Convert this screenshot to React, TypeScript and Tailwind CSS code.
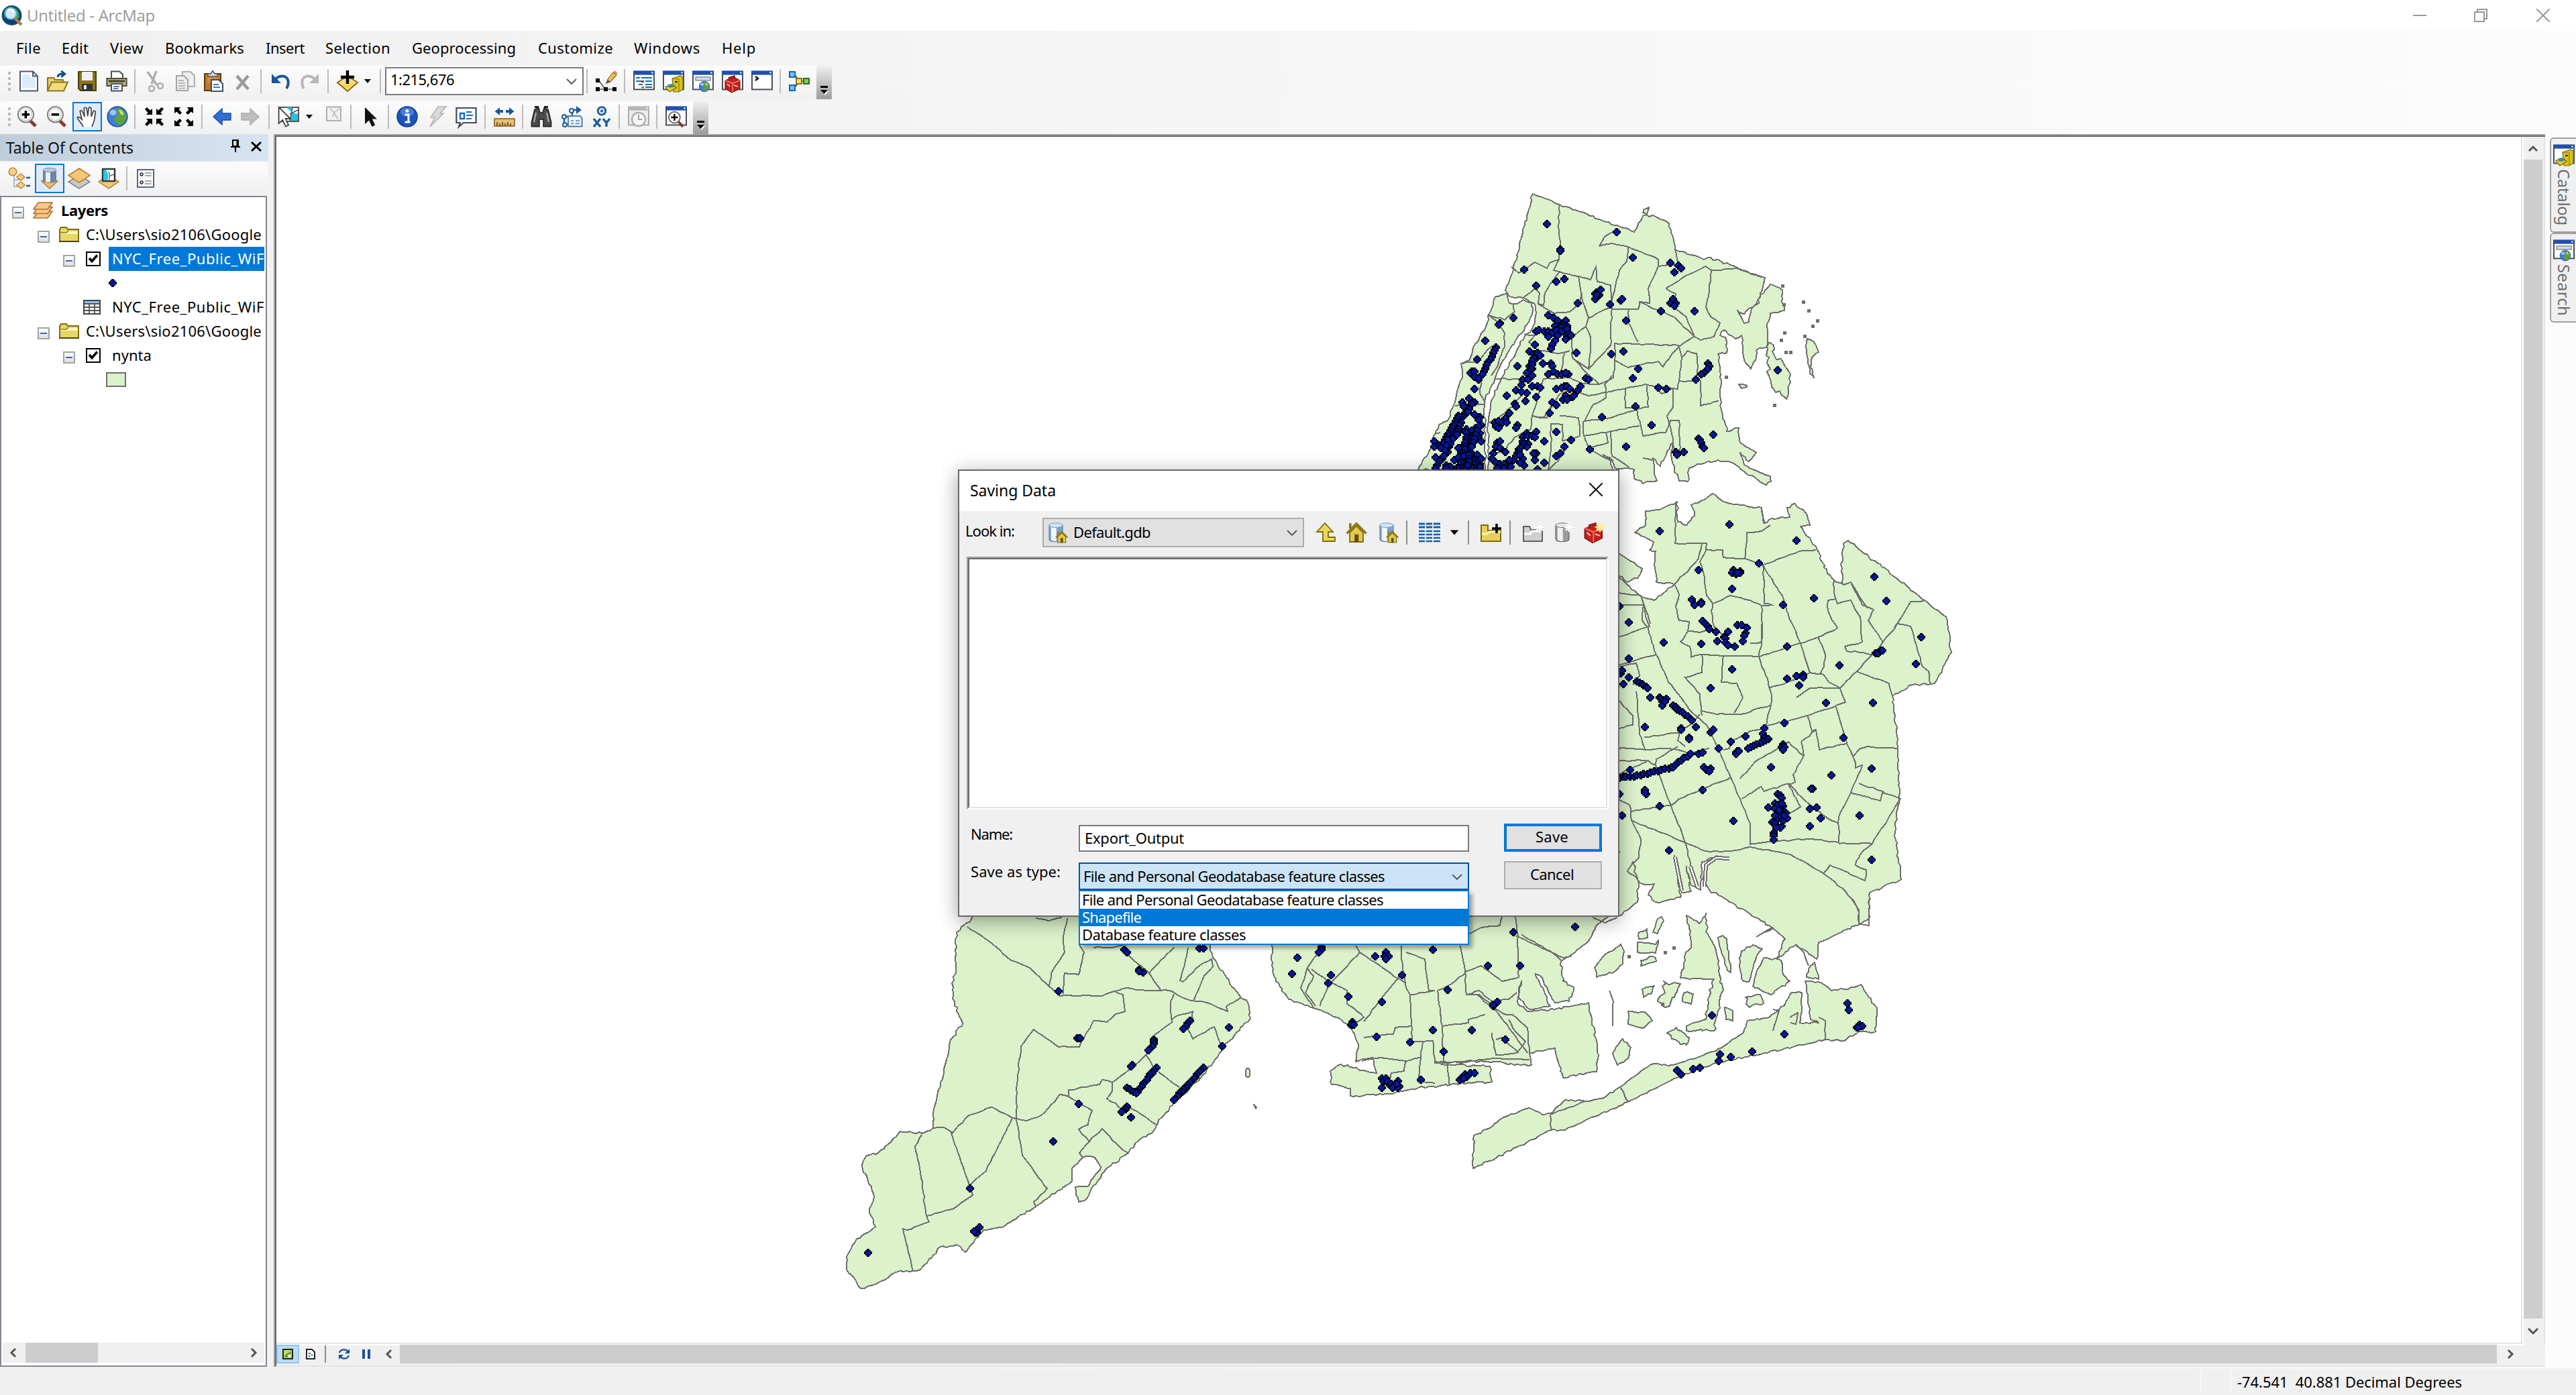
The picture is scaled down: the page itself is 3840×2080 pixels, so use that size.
import React, { useLayoutEffect, useRef } from "react";

/* ---------- text with a fixed advance width ---------- */
function Fit({ w, vertical, className = "", children }: { w: number; vertical?: boolean; className?: string; children: string }) {
  const ref = useRef<HTMLSpanElement>(null);
  useLayoutEffect(() => {
    const el = ref.current!;
    el.style.letterSpacing = "0px";
    const r = el.getBoundingClientRect();
    const natural = vertical ? r.height : r.width;
    el.style.letterSpacing = `${(w - natural) / children.length}px`;
  }, [w, children, vertical]);
  return (
    <span ref={ref} className={"inline-block shrink-0 -translate-y-px whitespace-pre " + className}>
      {children}
    </span>
  );
}

/* ---------- map geometry ---------- */
type Frame = { x: number; y: number; sx: number; sy: number };
type P = [number, number];
const NORTH: Frame = { x: 2080, y: 270, sx: 680 / 1568, sy: 1 / 3 };
const EAST: Frame = { x: 2380, y: 700, sx: 560 / 1568, sy: 720 / 1568 };
const SOUTH: Frame = { x: 1880, y: 1340, sx: 0.625, sy: 1 / 3 };
const WEST: Frame = { x: 1240, y: 1340, sx: 680 / 1568, sy: 600 / 1568 };

const parse = (f: Frame, s: string): P[] =>
  s.trim().split(/\s+/).map((t) => {
    const [a, b] = t.split(",").map(Number);
    return [f.x + a * f.sx, f.y + b * f.sy];
  });

let seed = 7;
const rnd = () => {
  seed = (seed * 16807) % 2147483647;
  return seed / 2147483647 - 0.5;
};

function rough(pts: P[], amp: number, closed: boolean): string {
  const out: P[] = [];
  const n = pts.length;
  const step = closed ? 5 : 7;
  for (let i = 0; i < (closed ? n : n - 1); i++) {
    const a = pts[i];
    const b = pts[(i + 1) % n];
    const d = Math.hypot(b[0] - a[0], b[1] - a[1]);
    const k = Math.max(1, Math.round(d / step));
    for (let j = 0; j < k; j++) {
      const t = j / k;
      const q = j === 0 ? 0 : amp;
      out.push([a[0] + (b[0] - a[0]) * t + rnd() * q, a[1] + (b[1] - a[1]) * t + rnd() * q]);
    }
  }
  if (!closed) out.push(pts[n - 1]);
  return "M" + out.map((p) => `${Math.round(p[0])} ${Math.round(p[1])}`).join("L") + (closed ? "Z" : "");
}

const LAND: [Frame, string, number][] = [
  [NORTH, "78,1292 100,1240 125,1190 135,1130 150,1090 178,1075 205,990 212,940 230,880 225,815 255,800 265,760 320,620 322,595 345,515 385,500 392,545 412,550 440,532 468,542 472,580 455,640 425,690 395,750 372,800 345,870 325,930 306,990 308,1100 310,1292", 3],
  [NORTH, "472,57 565,105 700,170 820,228 835,190 850,155 885,153 920,175 940,190 955,250 962,305 1060,350 1075,342 1150,375 1200,400 1270,432 1255,500 1250,545 1215,570 1200,595 1175,580 1200,635 1215,630 1225,570 1265,500 1290,462 1330,485 1328,540 1338,580 1290,590 1278,640 1278,740 1240,755 1238,800 1222,840 1200,800 1190,690 1170,705 1130,665 1115,690 1135,700 1140,768 1110,775 1115,850 1120,890 1115,960 1120,1020 1135,1090 1140,1120 1180,1105 1185,1170 1240,1215 1215,1255 1185,1215 1200,1270 1230,1290 1290,1320 1292,1345 1275,1360 1200,1300 1160,1260 1110,1248 1060,1262 1010,1285 1005,1345 975,1340 960,1290 950,1240 955,1170 935,1210 910,1275 885,1240 890,1310 900,1340 850,1352 820,1330 820,1290 790,1285 755,1285 740,1240 715,1225 740,1250 750,1310 320,1310 320,1060 330,980 360,900 400,800 430,720 470,660 485,590 478,545 440,522 400,520 378,488 405,400 435,240", 3],
  [NORTH, "1290,722 1300,735 1305,785 1335,815 1352,850 1357,905 1345,975 1325,955 1300,930 1280,860 1285,790 1278,740", 6],
  [NORTH, "1415,705 1430,710 1445,735 1455,765 1432,790 1428,830 1440,878 1425,860 1418,800 1412,740", 2],
  [NORTH, "1180,908 1205,912 1208,922 1190,926", 1],
  [NORTH, "855,125 872,118 865,148 852,140", 1],
  [EAST, "90,270 190,322 180,345 130,365 90,340", 3],
  [EAST, "90,345 130,375 180,410 240,425 290,395 325,372 250,365 243,320 245,265 220,262 238,235 160,205 205,180 205,135 280,125 335,105 340,170 375,180 410,150 395,115 440,100 485,78 530,105 600,115 690,125 698,175 730,160 805,155 795,125 830,112 870,140 890,180 850,185 870,210 915,250 940,300 990,360 1030,375 1022,330 1030,240 1050,230 1370,425 1460,480 1480,595 1410,695 1320,700 1235,735 1245,800 1258,900 1262,1060 1245,1180 1272,1330 1140,1375 1138,1460 1085,1480 927,1535 919,1590 831,1543 752,1586 788,1524 734,1488 534,1394 470,1365 445,1330 455,1280 500,1255 440,1275 435,1365 395,1350 375,1290 395,1370 355,1375 325,1255 350,1390 245,1405 215,1380 240,1345 190,1345 130,1305 150,1275 175,1345 170,1405 90,1450", 3],
  [SOUTH, "25,60 25,300 35,370 65,450 125,490 180,530 215,580 232,650 225,730 265,712 275,780 190,742 165,770 168,830 212,850 212,882 290,875 400,840 550,818 545,750 445,742 415,735 555,728 620,745 645,745 640,690 700,670 720,800 800,775 805,700 780,465 700,495 635,505 612,470 620,370 612,440 640,495 690,480 655,335 665,345 700,465 735,460 745,395 720,370 715,280 740,250 780,190 805,110 850,60", 3],
  [SOUTH, "505,1205 507,1060 545,1025 580,975 640,935 670,965 690,960 725,900 775,905 810,895 865,830 930,740 980,745 1040,710 1085,680 1150,600 1160,545 1205,535 1235,495 1250,470 1265,420 1290,420 1290,500 1285,555 1330,555 1310,540 1298,370 1335,375 1360,410 1400,405 1430,385 1468,490 1465,595 1425,595 1390,635 1345,630 1200,690 1085,735 990,800 875,910 725,1035 690,1035 560,1160", 2.5],
  [SOUTH, "1015,75 1045,110 1060,65 1065,160 1085,230 1092,340 1100,400 1090,500 1080,590 1015,590 1015,570 1060,540 1065,450 1080,360 1000,355 1010,260 1025,220 1020,120", 4],
  [SOUTH, "955,80 960,100 945,155 935,150 945,90", 2],
  [SOUTH, "900,150 920,135 922,175 900,180", 3],
  [SOUTH, "898,195 940,205 947,185 940,243 898,240", 2],
  [SOUTH, "858,205 865,235 862,290 845,325 800,350 795,310 820,250", 2],
  [SOUTH, "905,275 935,258 942,280 905,300", 3],
  [SOUTH, "1100,165 1110,180 1120,330 1112,320 1095,220 1090,175", 2],
  [SOUTH, "1172,208 1195,225 1180,260 1165,370 1150,370 1140,300 1145,235", 3],
  [SOUTH, "1200,265 1240,275 1245,340 1260,370 1215,430 1172,390 1180,330", 3],
  [SOUTH, "1320,285 1330,360 1300,350 1310,300", 2],
  [SOUTH, "960,370 975,385 1000,380 985,440 965,485 945,460 960,425", 7],
  [SOUTH, "908,405 938,390 930,425 912,440", 5],
  [SOUTH, "1010,420 1030,425 1025,470 1005,460", 3],
  [SOUTH, "1155,440 1190,430 1195,470 1165,485", 7],
  [SOUTH, "875,505 915,508 932,545 910,580 875,560", 2],
  [SOUTH, "1105,485 1125,500 1125,545 1108,540", 2],
  [SOUTH, "990,575 1020,620 1015,655 995,640 968,600", 4],
  [SOUTH, "862,628 882,665 875,715 850,745 838,690", 2],
  [WEST, "480,60 480,80 430,130 425,200 427,280 413,330 415,390 450,485 405,560 385,680 350,820 348,895 310,915 235,908 160,990 120,1000 103,1040 125,1100 145,1160 130,1220 150,1278 85,1325 50,1395 50,1445 100,1518 155,1500 220,1455 305,1445 370,1360 430,1348 460,1378 520,1290 585,1280 700,1200 825,1100 825,1050 865,1005 905,1008 925,1045 880,1120 838,1125 848,1180 870,1175 940,1055 1020,990 1060,935 1100,915 1120,875 1175,795 1285,680 1360,560 1438,465 1430,405 1405,385 1310,230 1300,190 1300,60", 3],
  [WEST, "1423,668 1427,662 1433,662 1437,668 1437,690 1433,696 1427,696 1423,690", 0],
  [WEST, "1450,803 1460,812 1458,818", 1],
];

const LINES: [Frame, string][] = [
  // Bronx and upper Manhattan
  ...([
    "565,105 560,200 568,290 562,350 545,400 630,425 672,440 690,385 695,450 740,465 745,560 665,612 640,520 630,425",
    "400,385 425,410 480,362 520,390 530,365 562,350", "435,525 480,480 495,500 492,550 510,555 515,500 545,440 565,405",
    "492,550 545,590 600,585 635,545 640,500", "700,290 720,250 760,215", "700,290 745,280 800,295 905,350 905,380 870,480 875,545 840,540 835,572 745,572 745,540",
    "800,295 795,360 770,400 745,530 740,735 665,840", "962,305 975,375 905,380", "930,480 985,435 1065,382 1085,400 1170,390 1270,432", "930,480 965,505 955,560 1000,610 1028,695",
    "840,540 960,610 1028,695", "1085,400 1080,490 1068,560 1085,610 1117,635 1095,695 1050,712 1028,695 975,740 930,810 920,830 905,808 850,820 800,835 755,800 755,725 975,735",
    "803,572 803,635 835,720", "665,612 655,650 672,700 665,840 610,795 605,700 655,650", "610,795 700,910 750,880 755,800", "975,740 985,790 975,895 970,930 860,910 725,945 720,910 745,870",
    "985,790 1005,760 1035,770 1040,830 1030,895 975,895", "1050,890 1050,1005 1112,985", "700,910 640,905 600,880 510,885 470,1050 510,1060 540,1000 565,950",
    "725,945 725,970 680,1000 650,1075 740,1060 830,1020 790,1015 790,930", "830,1020 870,1010 865,915", "830,1020 850,1140 930,1125 945,1070 975,1070 980,1195 960,1230", "955,930 955,1010 935,1050 950,1130 960,1200",
    "840,1095 740,1120 648,1140 645,1075", "740,1120 745,1230 805,1280", "650,1145 665,1195 730,1170 725,1125", "665,1195 700,1225 750,1250", "565,1050 630,1060 635,1140 575,1160 575,1090 535,1085 535,1200 525,1292 560,1250 580,1205",
    "565,950 600,935 665,960 725,945", "320,600 375,620 410,585 405,550", "320,600 345,625 375,680 375,740 350,830 330,870", "205,1005 270,1000 305,1000", "340,885 425,885 440,950 400,1010 340,1075 320,1080",
    "230,815 280,810 330,740 350,730", "470,1050 465,1110 410,1145 380,1200 325,1230", "540,1000 520,1060 470,1050", "442,685 480,690 460,720 490,760 560,770 600,760", "580,770 575,830 560,870",
    "155,1125 135,1130", "300,830 290,950 308,990", "955,930 915,950 890,925", "850,1240 890,1250",
  ].map((s) => [NORTH, s] as [Frame, string])),
  // Queens
  ...([
    "330,105 328,240 460,240 455,260 525,262 530,285 620,290 628,205 690,200 725,180", "440,240 425,290 380,330 325,372", "460,260 430,300 450,350 460,410 485,435 480,460 490,510 530,540",
    "620,290 695,310 700,380 700,435 730,440 690,442 690,560 678,600", "695,310 845,265 915,262", "695,310 740,370 775,410 800,470 850,565 890,660 940,665", "485,435 560,410 640,425 690,442",
    "325,372 345,405 330,445 345,490 385,495 380,525 350,560 390,575 395,610 440,600 520,605 680,607 850,565 925,545 1005,515 965,460 965,425 1000,420", "678,600 690,640 715,680 730,735 728,765 600,795 500,795 440,785",
    "440,600 440,660 370,675 430,730 440,800", "528,605 522,690 585,695 610,740 575,790", "690,125 698,175", "990,360 990,400 1005,435 1060,425 1100,480 1110,560 1035,575 1045,590 1115,595 1145,600",
    "1030,375 1060,365 1110,440 1155,455 1135,490 1195,560 1145,605 1085,655 1015,710 890,710 835,740", "1195,560 1240,520 1310,430 1370,425", "1240,520 1255,500 1310,510 1335,570 1360,640 1385,655 1392,695", "925,545 955,600 950,640 935,660 970,690 1015,710",
    "1085,655 1220,695 1235,735", "1015,710 1040,755 990,770 880,800 700,835", "720,710 840,680 890,660", "728,765 715,800 705,850", "880,800 900,850 915,845 930,910 1045,890 1010,800 1000,770",
    "1045,890 1075,940 1080,970 1110,960 1060,1050 1010,1130 1012,1210 880,1200 640,1215", "1068,935 1100,905 1130,900 1255,905", "1095,1020 1195,1045 1185,1075 1060,1050", "1195,1050 1268,1070 1150,1215 1010,1215", "1150,1215 1100,1250 1080,1285 1125,1300 1120,1335 975,1285 945,1310",
    "90,440 195,440 210,490 220,510 90,545", "195,440 190,490 215,515 250,600 90,635", "90,400 185,410 225,500", "250,600 300,690 400,790 460,830 510,910 560,1000 600,1070 640,1150 640,1220",
    "165,720 180,860 205,910 90,905", "200,870 335,855 390,830 430,795", "205,910 300,905 400,920 470,905", "90,945 215,945 245,960 310,1090 370,1210 400,1310", "245,960 250,940 340,900", "310,1090 345,1070 560,1000",
    "600,1005 660,950 800,885 865,930 820,990 830,1015 700,1045 685,1030 650,1050 605,1070", "530,910 555,905 560,885 640,850 695,840", "855,885 915,845", "855,885 865,930", "90,1070 140,1090 145,1140 370,1210 455,1240 560,1240 640,1225 810,1250 945,1310 1040,1370 1095,1430 1095,1465",
    "145,1110 310,1090", "785,1130 850,1095 800,1020 870,1075 960,1130 1012,1150", "90,745 150,800 150,830 90,840", "90,990 160,965 210,950", "145,1140 185,1200 175,1260 150,1280", "670,1515 735,1490",
    "380,525 430,530 480,515", "690,500 690,560 640,565", "90,640 165,630 180,670 150,700", "1060,365 1090,400 1130,450", "345,850 340,880 370,900",
  ].map((s) => [EAST, s] as [Frame, string])),
  // Brooklyn and the Rockaways
  ...([
    "575,80 570,120 525,130 495,158", "607,80 612,165 615,350 575,370 525,300 490,325 455,380 420,410", "607,165 720,265 740,255", "620,160 690,235 715,275", "475,210 485,300 490,430 520,430 550,470",
    "335,210 335,270 345,400 355,430 415,410 400,410 390,270 345,240", "150,210 110,310 95,400 125,490", "225,210 235,240 160,390 140,480", "235,240 345,380", "120,315 160,370 205,410 205,470 245,530 215,580",
    "330,345 285,450 245,550", "355,430 358,565 360,640 410,635 415,735", "420,410 432,570 435,730", "432,570 495,555 495,540 535,520", "358,570 320,575 315,605 245,620", "385,640 380,710 345,725 285,710 240,725",
    "380,710 375,820 415,825", "345,725 340,770 310,780 305,830", "445,742 448,830", "515,430 560,500 600,600 635,690", "545,480 585,520 600,520 635,580 640,690", "590,540 600,580 630,640 610,690 560,700 550,600",
    "560,630 575,620 615,690", "415,730 450,735 555,715 640,720", "490,430 520,410 550,460 590,450 610,420", "858,845 875,910", "690,965 692,1035", "690,965 775,905", "1345,630 1345,545 1330,530", "1260,530 1280,510 1275,560 1262,555",
    "110,310 125,345 105,420 130,480", "1305,300 1295,240 1275,205", "830,410 840,460 838,570", "1220,130 1180,170", "1410,0 1425,60 1425,110 1450,120 1450,80", "1450,0 1450,80", "790,85 820,108 850,85", "1220,495 1235,500 1220,590",
  ].map((s) => [SOUTH, s] as [Frame, string])),
  // Staten Island
  ...([
    "465,110 540,165 615,240 680,270 745,340 785,378 930,378 970,360 1015,348 1080,358 1160,358 1235,398 1290,405 1360,438 1355,420 1405,388", "810,75 795,150 800,210 755,290 748,340", "850,180 868,210 848,295 800,290 795,370",
    "970,360 1000,375 1008,438 975,450 945,480 900,475 870,535 850,577 780,577 695,510 650,575 635,740 635,860 655,1000 740,1130 695,1180 700,1200", "1015,215 1090,290 1130,355", "1175,190 1090,290", "1225,190 1215,240 1197,320 1205,325 1265,260 1305,235 1310,265 1280,300 1245,395",
    "1175,370 1165,400 1168,480 1110,530", "1168,470 1190,455 1240,440 1240,470 1225,510 1240,545 1315,500 1340,575", "1080,610 1110,540", "1080,610 1115,670 1195,735", "1080,610 1020,670 965,715 930,705 920,725 815,745 815,770 785,762 720,845 670,865 620,855 550,812 470,845 415,912 385,890 348,895",
    "965,715 965,750 945,780 1000,820 1020,810 1115,880", "815,770 895,825 880,880 848,900 885,945 850,990 860,1005", "885,945 930,897 1000,980 1020,990", "408,905 475,1125 485,1155 415,1210 325,1235 303,1050 285,965 310,920", "620,855 575,960 530,1060 475,1115", "325,1235 335,1260 255,1292 245,1285 278,1450",
    "900,190 965,190 1000,180", "700,75 745,85 790,72",
  ].map((s) => [WEST, s] as [Frame, string])),
];

/* each token is either "x,y" or "x,y,x2,y2,n" for n evenly spread points */
const DOTS: [Frame, string][] = [
  [NORTH, "521,192 567,308 567,312 442,396 484,467 553,450 580,437 760,228 816,342 945,366 975,378 983,390 959,408 627,546 737,551 775,533 779,527 912,582 1028,582 793,624 622,768 742,774 783,762 834,840 816,881 903,924 931,930 1074,816 1080,830 1074,840 1062,857,1050,865,2 1032,888 825,1008 710,1056 880,1092 1092,1134 793,1188 667,1200 1314,846 965,1212 991,1212 967,1224 1042,1150 1045,1160 1050,1170 1055,1185 1062,1195 947,547 954,528 965,545 957,555 690,495 685,505 700,510 707,486 690,520 685,530 692,510 405,612 360,638 355,643 309,714 281,798 419,828 479,732 346,744,300,865,10 262,850 258,860 272,852 270,875 285,890 288,880 270,930 382,960 252,970 270,990 232,990 240,1005 262,995 236,1010 255,1020 525,600 545,610 560,625 585,624 575,640 590,648 548,650 485,670 495,665 510,672 525,670 540,678 555,665 570,655 560,690 580,680 595,675 603,690 585,705 525,697 548,714 538,730 535,750 570,670 590,660 460,762 475,772 490,765 480,800 497,780 508,816 536,816 470,840 460,830 475,790,460,870,6 470,870 450,860 437,888 432,912 455,890 470,915 490,920 415,936 450,948 484,963 447,984 500,922 435,940 410,995 415,1005 540,828 545,850 525,864 560,862 570,865 595,864 585,860 655,882 662,886 580,915 555,930 570,925 590,915 600,930 622,942 637,918 628,938 585,960 575,975 590,975 608,968 615,960 540,990 555,1000 530,1038 391,1038 380,1060 340,1080 355,1075 370,1080 385,1080 345,1095 355,1105 420,1092 415,1102 553,1122 604,1158 580,1188 553,1230 567,1218 511,1164 484,1122 450,1125 440,1145 455,1140 470,1140 480,1145 455,1175 450,1190 425,1200 440,1165,420,1215,6 512,1260 484,1218 480,1248 475,1220 440,1240 445,1272 430,1260 415,1230 405,1250 395,1275 380,1210 430,1225 350,1170 360,1165 345,1190 360,1195 335,1215 330,1240 345,1260 360,1265 375,1265 350,1285 375,1285 390,1245 488,1290"],
  [NORTH, "240,1040,205,1095,8 218,1052,185,1140,9 200,1090,155,1195,10 225,1080,200,1150,6 250,1030 270,1045 290,1055 285,1065 297,1090 275,1105 265,1115 292,1130 245,1110 240,1120 265,1140 255,1150 285,1145 275,1160 295,1165 260,1170 245,1165 235,1180 218,1195 250,1200 265,1190 240,1205 225,1215 135,1165 135,1190 150,1180 165,1170 185,1190 190,1175 210,1135 155,1195 180,1210 170,1225 160,1240 137,1237 150,1255 143,1270 140,1285 175,1270 190,1275 205,1250 215,1235 230,1260 215,1280 235,1225,280,1225,5 240,1240,285,1250,5 225,1260,290,1265,6 210,1285,292,1285,8 245,1130,235,1230,8 265,1150,250,1270,9 285,1100,265,1190,6 180,1160,165,1230,4 295,1240 290,1275 175,1285"],
  [EAST, "263,200 554,179 834,230 677,304 1159,348 1209,427 907,418 778,440 424,326 571,326 565,337 599,331 600,337 580,340 590,336 565,388 396,423 407,438 435,432 436,436 95,444 134,496 279,561 134,614 436,566 443,492 455,503 463,510 470,518 498,526 503,557 531,545 548,526 535,550 540,560 548,570 576,574 588,505 605,505 627,513 620,530 615,542 609,557 795,574 1013,635 1355,545 1332,631 1165,597 1175,595 1185,590 1192,588 565,648 476,709 795,679 834,670 862,665 862,674 845,701 957,757 1153,757 784,823 1030,871 1148,971 980,993 901,1035 896,1037 889,1102 918,1097 935,1132 890,1158 1097,1123 1148,1267 100,660 108,652 134,675 112,697 170,688,215,708,6 223,740 262,740 270,745 275,755 280,748 290,745 275,765 285,755 318,766,400,815,9 414,835 201,835 353,840 351,845 386,870 387,875 476,852 487,844 509,905 559,884 621,866 699,840 693,860 700,870 715,876 705,880,632,908,7 582,918 590,915 583,922 593,915 428,923 440,918 450,965 476,971 460,975 468,980 442,1040 571,1140 728,966 778,893 770,902 785,900 780,910 302,1237 201,1042 207,1054 203,1048 97,1055 106,1123 262,1093 140,975 95,1000,185,993,7 195,990,315,967,9 320,965,390,925,7 755,1056 768,1058 775,1068 715,1097 743,1083 755,1090 745,1100 778,1095 770,1085 755,1110 780,1110 790,1115 765,1122 797,1132 778,1140 750,1135 732,1145 745,1150 772,1158 765,1165 750,1165 740,1180 740,1190 738,1202 760,1105 785,1125 745,1125"],
  [SOUTH, "145,218 143,228 137,242 86,264 75,336 166,342 160,378 208,438 288,462 217,550 214,562 222,565 275,618 355,642 409,588 502,588 435,684 582,630 444,408 336,342 409,228 272,258 297,240 293,260 304,258 296,270 540,300 617,300 601,150 748,126 563,462 553,480 555,475 380,810 288,803 290,815 298,805 305,825 288,845 300,815 310,830 325,815 318,835 328,840 315,845 326,845 322,828 475,810 480,800 485,790 487,783 495,785 500,780 510,780 488,798 483,806 1075,522 1247,606 1171,684 1094,695 1120,708 1090,727 1047,756 1031,762 992,768 1002,788 1398,468 1401,498 1421,575 1428,565 1432,572 1425,578"],
  [WEST, "1007,200 1015,208 1055,275 1062,280 1072,288 1058,280 1265,192 1276,192 779,360 845,543 852,543 1364,501 1342,574 1231,475,1208,508,4 1106,547 1105,555 1108,565 1100,575 1092,585 1088,592 1033,646 1030,652 1114,660,1045,760,12 1015,736,1045,760,5 1277,660,1175,785,16 848,799 1015,808 1008,818 1002,828 998,832 1028,852 760,945 475,1129 508,1278 500,1290 492,1300 497,1302 490,1298 124,1380"],
];

const dotList: P[] = DOTS.flatMap(([f, s]) =>
  s.trim().split(/\s+/).flatMap((t) => {
    const v = t.split(",").map(Number);
    const at = (a: number, b: number): P => [Math.round((f.x + a * f.sx) / 2) * 2, Math.round((f.y + b * f.sy) / 2) * 2];
    if (v.length < 5) return [at(v[0], v[1])];
    const n = v[4];
    return Array.from({ length: n }, (_, i) => {
      const k = i / (n - 1);
      return at(v[0] + (v[2] - v[0]) * k, v[1] + (v[3] - v[1]) * k);
    });
  })
);
const landPaths = LAND.map(([f, s, a]) => rough(parse(f, s), a, true));
const linePath = LINES.map(([f, s]) => rough(parse(f, s), 1.6, false)).join("");

const Dot = ({ x, y }: { x: number; y: number }) => (
  <g transform={`translate(${x} ${y})`}>
    <path d="M-2-6h4v2h2v2h2v4h-2v2h-2v2h-4v-2h-2v-2h-2v-4h2v-2h2z" fill="#000" />
    <path d="M-1-4h2v1h2v2h1v2h-1v2h-2v1h-2v-1h-2v-2h-1v-2h1v-2h2z" fill="#0018a8" />
  </g>
);

function CityMap() {
  return (
    <svg className="block h-[1798px] w-[3346px]" viewBox="412 204 3346 1798" shapeRendering="crispEdges">
      <g fill="#dbf2cb" stroke="#6e6e6e" strokeWidth="2" strokeLinejoin="round">
        {landPaths.map((d, i) => <path key={i} d={d} />)}
      </g>
      <path d={linePath} fill="none" stroke="#6e6e6e" strokeWidth="2" />
      {["M2541 1322L2543 1290L2558 1279L2578 1280", "M2497 1278L2507 1328", "M2520 1292L2530 1322"].map((d) => (
        <g key={d} fill="none">
          <path d={d} stroke="#6e6e6e" strokeWidth="6" />
          <path d={d} stroke="#fff" strokeWidth="2" />
        </g>
      ))}
      <g fill="#6e6e6e">
        {[[2655, 424], [2686, 448], [2694, 461], [2707, 476], [2700, 484], [2688, 499], [2658, 494], [2653, 505], [2660, 523], [2667, 523], [2643, 602], [2657, 452], [2571, 560], [2493, 1411], [2426, 1424], [2476, 1495], [2480, 1418]].map(([x, y]) => (
          <rect key={x + "-" + y} x={x} y={y} width="5" height="5" />
        ))}
      </g>
      {dotList.map(([x, y], i) => <Dot key={i} x={x} y={y} />)}
    </svg>
  );
}

/* ---------- icons, drawn on a 16-unit grid ---------- */
const I = ({ c = "", children }: { c?: string; children: React.ReactNode }) => (
  <svg viewBox="0 0 16 16" className={"h-8 w-8 shrink-0 overflow-visible " + c}>{children}</svg>
);
const WindowFrame = ({ grey }: { grey?: boolean }) => (
  <>
    <rect x=".5" y=".8" width="15" height="13.4" fill={grey ? "#ececec" : "#fff"} stroke={grey ? "#aaa" : "#4a4f5a"} />
    <rect x="0" y=".3" width="16" height="3" fill={grey ? "#b5b5b5" : "#1f4fae"} />
    <rect x="13.6" y="1.2" width="1.2" height="1" fill="#fff" />
  </>
);
const Globe = ({ x, y, r }: { x: number; y: number; r: number }) => (
  <g transform={`translate(${x} ${y}) scale(${r / 7})`}>
    <circle r="7" fill="#3f7fd6" stroke="#28549c" strokeWidth=".8" />
    <path d="M0-6C4-6 6-3 6.3 0C6 4 3 6 1 6C0 4-3 4-2 1C-1-1 1-1 0-3C-1-4-1-5 0-6Z" fill="#5fa23a" />
    <path d="M1-5C3-5 5-3 4-1L2-2Z" fill="#c5e08a" />
    <ellipse cx="-3" cy="-3" rx="2.4" ry="2" fill="#b7d6fb" opacity=".8" />
  </g>
);
const Lens = ({ sign, c = "" }: { sign: string; c?: string }) => (
  <I c={c}>
    <path d="M10 10.5L14.6 15" stroke="#8c3a2e" strokeWidth="2.4" />
    <circle cx="7.2" cy="6.4" r="5.8" fill="#f4f4f4" stroke="#777" strokeWidth=".9" />
    <circle cx="7.2" cy="6.4" r="4.4" fill="#fff" stroke="#c4c4c4" strokeWidth=".6" />
    <path d={sign} stroke="#000" strokeWidth="1.8" />
  </I>
);
const CatalogShape = () => (
  <>
    <path d="M7 6L13 4L15 5V14L12 16H8Z" fill="#d8c21a" stroke="#75690c" strokeWidth=".6" />
    <path d="M7 6L12 6.6V16" fill="none" stroke="#8f8112" strokeWidth=".6" />
    <path d="M2 12L8 11L10 13L5 16L3 14Z" fill="#e3cc22" stroke="#6a600c" strokeWidth=".6" />
    <ellipse cx="6" cy="11.5" rx="2.4" ry="1.4" fill="#3f86a8" />
    <path d="M9 8.5h2" stroke="#222" />
  </>
);
const Toolbox = () => (
  <>
    <path d="M2.5 7.5L9 5L13.5 7.5V13.5L7.5 16.5L2.5 13.5Z" fill="#c8201c" stroke="#7a1410" strokeWidth=".6" />
    <path d="M2.5 7.5L8 9.6L13.5 7.5M8 9.6V16" stroke="#f0807a" strokeWidth=".7" fill="none" />
    <path d="M5.4 7V5.4L9.4 4.2V6" stroke="#8c1814" fill="none" />
    <path d="M9 11l3 1M4 10l2 2" stroke="#ddd" strokeWidth=".8" />
  </>
);
const Cylinder = ({ grey }: { grey?: boolean }) => (
  <>
    <path d="M2 2.6V13C2 15.4 12 15.4 12 13V2.6Z" fill={grey ? "#9c9c9c" : "#7fa3cf"} stroke={grey ? "#666" : "#5f7da3"} strokeWidth=".6" />
    <path d="M3.4 3.5V13.6Q5 14.6 7.4 14.6V4Z" fill={grey ? "#f0f0f0" : "#eef5fd"} />
    <ellipse cx="7" cy="2.6" rx="5" ry="1.7" fill={grey ? "#e6e6e6" : "#d3e4f6"} stroke={grey ? "#777" : "#7d9bbf"} strokeWidth=".5" />
  </>
);
const HomeShape = () => (
  <>
    <path d="M3 8V15H13V8L8 3Z" fill="#e2c84e" stroke="#7e6a10" strokeWidth=".9" />
    <path d="M.8 8.8L8 1.4L15.2 8.8" fill="none" stroke="#8f7a18" strokeWidth="1.8" />
    <path d="M3.4 1V5" stroke="#8f7a18" strokeWidth="1.8" />
    <rect x="6.6" y="9.4" width="3" height="5.6" fill="#5f4d08" />
  </>
);
const GdbHome = ({ c = "" }: { c?: string }) => (
  <I c={c}>
    <Cylinder />
    <g transform="translate(6.5 6.5) scale(.6)"><HomeShape /></g>
  </I>
);
const Spark = ({ x, y, color, edge }: { x: number; y: number; color: string; edge: string }) => (
  <g transform={`translate(${x} ${y})`}>
    <circle r="3" fill={edge} opacity=".55" />
    <path d="M0-3.6V3.6M-3.6 0H3.6M-2.5-2.5L2.5 2.5M2.5-2.5L-2.5 2.5" stroke={color} strokeWidth="1.2" />
  </g>
);
const Folder = () => (
  <svg viewBox="0 0 15 13" className="ml-[14px] h-[26px] w-[30px] shrink-0">
    <path d="M.5 11.5V2.5L1.5 1H5.5L6.5 2.5H14.5V11.5Z" fill="#e8d668" stroke="#7d7010" />
    <path d="M1 5H6L7 4H14V6H1Z" fill="#fdf6bd" />
    <path d="M.5 5H5.5L7 3.6" fill="none" stroke="#8f8114" strokeWidth=".8" />
    <path d="M0 11.5H15" stroke="#4f4606" />
  </svg>
);
const Sep = ({ c }: { c: string }) => <div className={"h-9 w-[2px] shrink-0 bg-[#bdbdbd] " + c} />;
const Grip = () => (
  <div className="ml-3 flex w-1 shrink-0 flex-col gap-1">
    {[0, 1, 2, 3].map((i) => <div key={i} className="h-1 w-1 bg-[#bcbcbc]" />)}
  </div>
);
const Caret = ({ c }: { c: string }) => (
  <svg viewBox="0 0 10 6" className={"h-[6px] w-[10px] shrink-0 " + c}><path d="M0 0H10L5 6Z" fill="#000" /></svg>
);
const Overflow = () => (
  <div className="ml-[9px] flex h-full w-[23px] shrink-0 flex-col items-center justify-end bg-linear-to-b from-[#efefef] to-[#9c9c9c] pb-[6px]">
    <div className="h-[3px] w-[11px] bg-black" />
    <svg viewBox="0 0 12 8" className="mt-[3px] h-2 w-3"><path d="M1.500 1.500H12L7 8Z" fill="#fff" /><path d="M0 0H11L5.500 6Z" fill="#000" /></svg>
  </div>
);
const Chevron = ({ d, c = "", w = 3 }: { d: "up" | "down" | "left" | "right"; c?: string; w?: number }) => (
  <svg viewBox="0 0 16 16" className={"h-4 w-4 shrink-0 " + c}>
    <path d={{ up: "M2 11L8 5L14 11", down: "M1 5L8 12L15 5", left: "M11 2L5 8L11 14", right: "M5 2L11 8L5 14" }[d]} fill="none" stroke="#555" strokeWidth={w} />
  </svg>
);

const CatalogWindow = ({ c = "" }: { c?: string }) => <I c={c}><WindowFrame /><CatalogShape /></I>;
const SearchWindow = ({ c = "" }: { c?: string }) => (
  <I c={c}>
    <WindowFrame />
    <rect x="2.500" y="5" width="11" height="2.400" fill="#cfe0f4" stroke="#8a8f98" strokeWidth=".8" />
    <Globe x={9} y={12} r={3.9} />
  </I>
);

function StandardToolbar() {
  return (
    <div className="flex h-[50px] w-[1240px] items-center rounded-l bg-linear-to-b from-[#fcfcfc] to-[#f0f0f0]">
      <div className="flex -translate-y-[2px] items-center">
        <Grip />
        <I c="ml-[11px]"><path d="M1.500 .8H11L14.500 4.300V15.200H1.500Z" fill="#fff" stroke="#505a68" /><path d="M3 3H9V5H13V13H3Z" fill="#dcebfa" /><path d="M11 .8V4.300H14.500" fill="none" stroke="#505a68" /></I>
        <I c="ml-[11px]"><path d="M.5 15V5.500H5L6 7H12V9" fill="#e9d169" stroke="#8d7718" /><path d="M.5 15.200L3.500 8.800H15.500L12.500 15.200Z" fill="#f2dd7d" stroke="#8d7718" /><path d="M8 5C8 3 9.500 2.500 12 2.500M10.600 .4L13.300 2.600L10.600 5" fill="none" stroke="#104a8c" strokeWidth="1.500" /></I>
        <I c="ml-3"><path d="M1.500 1H14.500V15H3L1.500 13.500Z" fill="#8a7718" stroke="#4a3f0c" /><rect x="4" y="1" width="8" height="6.500" fill="#f0f0f0" /><rect x="4" y="10" width="8" height="5" fill="#333" /><rect x="5.500" y="11" width="2" height="3" fill="#eee" /></I>
        <I c="ml-3"><path d="M4 6V.7H10L12.500 3V6" fill="#fff" stroke="#4f4f4f" /><path d="M.7 6H15.300V11.500H.7Z" fill="#b9b58c" stroke="#4c4c38" /><path d="M2 8H14" stroke="#45452c" strokeWidth="1.600" /><path d="M4 10H12V15.200H4Z" fill="#fff" stroke="#4f4f4f" /><path d="M5.500 12H10M5.500 13.500H9" stroke="#4d7fc0" strokeWidth=".9" /></I>
        <Sep c="ml-[10px]" />
        <I c="ml-3"><path d="M3 1L10 11M9.500 .5L6 10" stroke="#adadad" strokeWidth="1.700" /><circle cx="12.500" cy="11.500" r="2" fill="none" stroke="#adadad" strokeWidth="1.300" /><circle cx="6" cy="13.500" r="2" fill="none" stroke="#adadad" strokeWidth="1.300" /></I>
        <I c="ml-[14px]"><path d="M6 1H12L15 4V12H6Z" fill="#eee" stroke="#b0b0b0" /><path d="M1.500 4H7L10 7V15H1.500Z" fill="#eee" stroke="#a5a5a5" /><path d="M3 7.500H7M3 9.500H8M3 11.500H8M3 13.300H8" stroke="#b5b5b5" strokeWidth=".9" /></I>
        <I c="ml-[10px]"><rect x="1.500" y="2.500" width="12" height="12.500" fill="#b9772f" stroke="#5d3a12" /><path d="M3.500 4H11.500V9H3.500Z" fill="#d08d42" /><path d="M4 4.500V2.500H6L7.500 .3L9 2.500H11V4.500Z" fill="#ddd" stroke="#555" strokeWidth=".8" /><path d="M6.500 7H12L15 10V15.500H6.500Z" fill="#fff" stroke="#3f4f66" /><path d="M8 10.500H12M8 12.500H13" stroke="#4278c2" /></I>
        <I c="ml-3"><path d="M3.500 4L12 14M12 4L3.500 14" stroke="#9b9b9b" strokeWidth="2.300" /></I>
        <Sep c="ml-[10px]" />
        <I c="ml-3"><path d="M3.500 8C6 3 13 3 13.800 8C14 10 13.500 12 12.500 13.500" fill="none" stroke="#1b5599" strokeWidth="2" /><path d="M1.500 2.500V9.500H8.500Z" fill="#1b5599" /></I>
        <I c="ml-3"><path d="M12.500 8C10 3 3 3 2.200 8C2 10 2.500 12 3.500 13.500" fill="none" stroke="#b7b7b7" strokeWidth="2" /><path d="M14.500 2.500V9.500H7.500Z" fill="#b7b7b7" /></I>
        <Sep c="ml-[10px]" />
        <I c="ml-3"><path d="M8 4L15.500 9L8 15.500L.5 9Z" fill="#f8dc8a" stroke="#8a6a1c" /><path d="M8 11L12.500 9.500L8 14.500L3.500 9.500Z" fill="#f3d900" opacity=".6" /><path d="M8 0V10M3 5H13" stroke="#000" strokeWidth="2.200" /></I>
        <Caret c="ml-[9px]" />
        <Sep c="ml-[13px]" />
        <div className="ml-[6px] flex h-[42px] w-[296px] shrink-0 items-center justify-between border-2 border-[#7a7a7a] bg-white pr-2 pl-[6px]">
          <Fit w={95} className="-mt-1">1:215,676</Fit>
          <Chevron d="down" w={1.800} />
        </div>
        <Sep c="ml-1" />
        <I c="ml-3"><path d="M2 7L7 14M2 14H14" stroke="#555" strokeWidth=".8" /><path d="M0 6h3v3H0zM0 12.500h3v3H0zM6 12.500h3v3H6zM12.500 12.500h3v3h-3z" fill="#000" /><path d="M8 9.500L9 6.500L13 1.500L15.500 3.500L11 8.500Z" fill="#f2c24b" stroke="#8a6a2a" strokeWidth=".6" /><path d="M13 1.500L14 0L16 1.500L15.500 3.500Z" fill="#d88a8a" /><path d="M7.500 10L9 6.800L10.800 8.400Z" fill="#555" /></I>
        <Sep c="ml-[10px]" />
        <I c="ml-3"><WindowFrame /><path d="M2 5.500H5M2 8H7M4 10.500H7" stroke="#1668b8" strokeWidth="1" /><path d="M6 5.500H14M9 8H14M9 10.500H14M9 12.500H14" stroke="#1668b8" strokeWidth="1" /><path d="M6 7.500h2v1.500H6z" fill="#d02020" /><path d="M6 12h2v1.200H6z" fill="#40a020" /></I>
        <CatalogWindow c="ml-3" />
        <SearchWindow c="ml-3" />
        <I c="ml-3"><WindowFrame /><Toolbox /></I>
        <I c="ml-3"><WindowFrame /><path d="M3 4.500L5 6L3 7.500" fill="none" stroke="#111" strokeWidth="1.200" /></I>
        <Sep c="ml-[10px]" />
        <I c="ml-3"><path d="M4 3L8 8L4 13M8 8H13" fill="none" stroke="#333" strokeWidth=".8" /><rect x=".5" y="1" width="4" height="4" fill="#79c0f8" stroke="#1565b5" /><rect x=".5" y="11" width="4" height="4" fill="#79c0f8" stroke="#1565b5" /><path d="M5.500 6h4v4h-4z" fill="#f5df5e" stroke="#8c7512" /><path d="M11 6h4v4h-4z" fill="#7ecb5e" stroke="#25701a" /></I>
      </div>
      <Overflow />
    </div>
  );
}

const Arrows = ({ out, c }: { out?: boolean; c: string }) => (
  <I c={c}>
    {[0, 90, 180, 270].map((r) => (
      <g key={r} transform={`rotate(${r} 8 8)`}>
        <path d={out ? "M1 1H5.500L4.300 2.500L6.500 5L5 6.500L2.700 4.300L1 5.500Z" : "M6.500 6.500H2L3.300 5L1 2.500L2.300 1L5 3.300L6.500 2Z"} fill="#000" />
      </g>
    ))}
  </I>
);

function ToolsToolbar() {
  return (
    <div className="mt-[3px] flex h-[49px] w-[1056px] items-center rounded-l bg-linear-to-b from-[#fcfcfc] to-[#f0f0f0]">
      <div className="flex -translate-y-[2px] items-center">
        <Grip />
        <Lens c="ml-2" sign="M7.200 3.500V9.300M4.300 6.400H10.100" />
        <Lens c="ml-3" sign="M4.300 6.400H10.100" />
        <div className="ml-2 flex h-11 w-11 shrink-0 items-center justify-center border-2 border-[#0078d7] bg-[#dfecf7]">
          <I><path d="M5 15.500C4.500 13.500 1 10.500 .6 8.500C1.500 7.500 3 9 4 10L2.600 4C3.300 3 4.300 3.500 4.600 4.500L6 8L5.600 1.800C6.300 .8 7.400 1 7.600 2L8.400 7.500L9.200 1.500C9.800 .6 11 1 11 2L11 8L12.600 4C13.300 3.200 14.400 3.800 14.200 4.800C13.500 7 14 9 13 11.500L11.500 15.500" fill="#fff" stroke="#4a4a4a" strokeWidth=".9" /></I>
        </div>
        <I c="ml-[7px]"><Globe x={8} y={8} r={7.400} /></I>
        <Sep c="ml-[9px]" />
        <Arrows c="ml-3" />
        <Arrows c="ml-3" out />
        <Sep c="ml-[10px]" />
        <I c="ml-[13px]"><path d="M1.500 8L8 2V5.500H14.500V10.500H8V14Z" fill="#2f6fd6" stroke="#1b4da8" strokeWidth=".7" /></I>
        <I c="ml-[10px]"><path d="M14.500 8L8 2V5.500H1.500V10.500H8V14Z" fill="#bdbdbd" stroke="#aaa" strokeWidth=".7" /></I>
        <Sep c="ml-[11px]" />
        <I c="ml-3"><rect x="2" y="1" width="13.500" height="10.500" fill="#fff" stroke="#555" /><path d="M6 1H11L9 11H15V6L11 5Z" fill="#22c4e8" /><path d="M11 1L9 11M9 6L15 3" stroke="#555" strokeWidth=".7" /><path d="M.8 1V13L3.600 10.500L6 15.300L8 14.300L5.800 9.500H9.500Z" fill="#fff" stroke="#444" strokeWidth=".9" /></I>
        <Caret c="ml-[10px]" />
        <I c="ml-4"><path d="M2.500 .8H13V11H2.500Z" fill="#f1f1f1" stroke="#b0b0b0" /><path d="M5 2L8 5L12 2M8 5L7 8M8 5L11 10" stroke="#c5c5c5" fill="none" /></I>
        <Sep c="ml-2" />
        <I c="ml-3"><path d="M4 1V13.500L7 10.800L9.300 15.500L11.600 14.300L9.400 9.800H13Z" fill="#111" /></I>
        <Sep c="ml-[10px]" />
        <I c="ml-[11px]"><circle cx="8" cy="8" r="7.500" fill="#1d56b8" stroke="#123f93" strokeWidth=".8" /><ellipse cx="8" cy="4.500" rx="5" ry="3.300" fill="#6ea1e6" opacity=".55" /><path d="M6.300 6.500H9V12M6.300 12H10.200" stroke="#fff" strokeWidth="1.500" fill="none" /><circle cx="8" cy="3.700" r="1.200" fill="#fff" /></I>
        <I c="ml-3"><path d="M9 .5H15L10.500 5.500H13L3 15.500L6.500 8.500H3.500Z" fill="#dadada" stroke="#b5b5b5" strokeWidth=".8" /></I>
        <I c="ml-3"><path d="M.7 1.500H15.300V12.500H6L2.500 15.500L3.500 12.500H.7Z" fill="#fff" stroke="#444c58" strokeWidth="1.100" /><path d="M3.500 5.500h3v4h-3z" fill="none" stroke="#1668b8" strokeWidth="1.200" /><path d="M8 4.500H12M8 7H13M8 9.500H12" stroke="#1668b8" /></I>
        <Sep c="ml-[11px]" />
        <I c="ml-3"><path d="M4.500 1L.8 4L4.500 7V5H7V3H4.500ZM11.500 1L15.200 4L11.500 7V5H9V3H11.500Z" fill="#165a9e" /><rect x=".5" y="9.500" width="15" height="5.500" fill="#e8be72" stroke="#8a622a" strokeWidth=".8" /><path d="M2.500 15V12M4.500 15V13M6.500 15V12M8.500 15V13M10.500 15V12M12.500 15V13" stroke="#70491a" strokeWidth=".9" /></I>
        <Sep c="ml-[10px]" />
        <I c="ml-[11px]"><path d="M3 2.500L6 1.500L7 5H9L10 1.500L13 2.500L15.300 12V15.300H9.500V10H6.500V15.300H.7V12Z" fill="#4a4a4a" stroke="#222" strokeWidth=".8" /><path d="M4 5L2.500 12M12 5L13.500 12" stroke="#a5a5a5" strokeWidth="1.200" /><path d="M3 .8H6M10 .8H13" stroke="#222" strokeWidth="1.500" /></I>
        <I c="ml-[14px]"><path d="M2 14V8H8V3H12" fill="none" stroke="#1c5c9c" strokeWidth="1.200" /><path d="M11 0L15 3L11 6Z" fill="#1c5c9c" /><circle cx="2" cy="8" r="1.500" fill="#fff" stroke="#1c5c9c" /><circle cx="7.500" cy="3.500" r="1.500" fill="#fff" stroke="#1c5c9c" /><circle cx="2.500" cy="14" r="1.500" fill="#fff" stroke="#1c5c9c" /><path d="M5 7.500H14L15.300 9V15.300H5Z" fill="#edf4fb" stroke="#557fa8" /><path d="M7 11H9M10.500 11H13.500M7 13H9M10.500 13H13.500" stroke="#6b9cd0" /></I>
        <I c="ml-3"><circle cx="8" cy="3.700" r="2.900" fill="#dcebf8" stroke="#1c5c9c" strokeWidth="1.400" /><circle cx="8" cy="3.700" r="1" fill="#1c5c9c" /><path d="M2 9.500L7 15.500M7 9.500L2 15.500M9 9.500L11.500 12.500L14 9.500M11.500 12.500V15.500" stroke="#1c5c9c" strokeWidth="1.700" fill="none" /></I>
        <Sep c="ml-[9px]" />
        <I c="ml-3"><WindowFrame grey /><circle cx="8" cy="10" r="5" fill="#f6f6f6" stroke="#b0b0b0" strokeWidth="1.200" /><path d="M8 6.500V10H10.500" fill="none" stroke="#a5a5a5" /></I>
        <Sep c="ml-[10px]" />
        <I c="ml-3"><WindowFrame /><path d="M9.500 11.500L13 15.500" stroke="#8c3a2e" strokeWidth="2" /><circle cx="6.700" cy="8.500" r="4.200" fill="#fff" stroke="#666" strokeWidth=".9" /><path d="M6.700 6V11M4.200 8.500H9.200" stroke="#000" strokeWidth="1.200" /></I>
      </div>
      <Overflow />
    </div>
  );
}

/* ---------- table of contents ---------- */
const Expander = ({ c }: { c: string }) => (
  <div className={"mt-[6px] flex h-[18px] w-[18px] shrink-0 items-center justify-center border-2 border-[#a3a3a3] bg-linear-to-b from-white to-[#dedede] " + c}>
    <div className="h-[2px] w-[10px] bg-[#4b63a7]" />
  </div>
);
const Check = () => (
  <svg viewBox="0 0 22 22" className="ml-4 h-[22px] w-[22px] shrink-0">
    <rect x="1" y="1" width="20" height="20" fill="#fff" stroke="#000" strokeWidth="2" />
    <path d="M5 10L9 14.500L17 5.500" fill="none" stroke="#000" strokeWidth="3.500" />
  </svg>
);

function Contents() {
  return (
    <aside className="flex h-[1840px] w-[400px] shrink-0 flex-col">
      <div className="flex h-10 items-center bg-linear-to-r from-[#bfcddb] to-[#d7e5f2] pl-[9px] text-[23px] text-[#111]">
        <Fit w={190} className="translate-y-0">Table Of Contents</Fit>
        <svg viewBox="0 0 14 20" className="-mt-1 ml-[145px] h-5 w-[14px]"><path d="M3 1H11V10H3ZM0 11H14M7 11V19M9.500 1V10" fill="none" stroke="#000" strokeWidth="2" /></svg>
        <svg viewBox="0 0 16 16" className="-mt-1 ml-4 h-4 w-4"><path d="M1 2L15 15M15 2L1 15" stroke="#000" strokeWidth="3" /></svg>
      </div>
      <div className="mt-[2px] flex h-12 items-center rounded bg-linear-to-b from-[#fcfcfc] to-[#f0f0f0]">
        <I c="ml-[13px]"><path d="M4 5V14H8M4 9H9" fill="none" stroke="#a9bbd0" /><circle cx="3" cy="3" r="2.900" fill="#f4cf8c" stroke="#c48a33" strokeWidth=".8" /><path d="M9 4.500L12 7L9 9.500L6 7ZM9 10.500L12 13L9 15.500L6 13Z" fill="#f4cf8c" stroke="#c48a33" strokeWidth=".8" /><path d="M13 7.500h3M13 13.500h3" stroke="#1d5f8f" strokeWidth="1.300" /></I>
        <div className="ml-[7px] flex h-11 w-11 shrink-0 items-center justify-center border-2 border-[#0078d7] bg-[#dfeaf5]">
          <I><path d="M2 10L8 8L14 10L8 15.500Z" fill="#f0bf62" stroke="#b97b22" strokeWidth=".7" /><path d="M3 1.500V10C3 11.800 13 11.800 13 10V1.500Z" fill="#6e84a6" /><path d="M5 2V10.800H8.500V2Z" fill="#e9eff7" /><ellipse cx="8" cy="1.800" rx="5" ry="1.500" fill="#b9c9de" stroke="#7788a2" strokeWidth=".5" /></I>
        </div>
        <I c="ml-[6px]"><path d="M8 5.500L16 10.500L8 15.500L0 10.500Z" fill="#c9c9c9" stroke="#848484" strokeWidth=".8" /><path d="M8 .5L16 5.800L8 11.200L0 5.800Z" fill="#f3c678" stroke="#b87d2a" strokeWidth=".8" /></I>
        <I c="ml-3"><path d="M8 5.500L15.500 10.500L8 15.500L.5 10.500Z" fill="#f3c678" stroke="#c08a33" strokeWidth=".8" /><rect x="3.500" y="1" width="9" height="9" fill="#fff" stroke="#333" strokeWidth="1.200" /><path d="M4 1.500H6L8 6L7 9.500H4Z" fill="#22c9e6" /><path d="M8 9.500L9 6L12 5M9 6L8 3" stroke="#666" strokeWidth=".7" fill="none" /></I>
        <Sep c="ml-[10px]" />
        <svg viewBox="0 0 26 28" className="ml-[14px] h-7 w-[26px]"><rect x="1" y="1" width="24" height="26" fill="#fff" stroke="#59677d" strokeWidth="2" /><circle cx="7" cy="8" r="2" fill="none" stroke="#222" strokeWidth="1.500" /><circle cx="7" cy="20" r="2" fill="none" stroke="#222" strokeWidth="1.500" /><path d="M12 6H22M12 10H22M12 18H22M12 22H22" stroke="#888" strokeWidth="1.500" /></svg>
      </div>
      <div className="mt-[2px] flex h-[1746px] w-[398px] flex-col overflow-hidden border-2 border-[#828790] bg-white">
        <div className="mt-[2px] flex h-9 items-center">
          <Expander c="ml-4" />
          <svg viewBox="0 0 30 26" className="ml-[13px] h-[26px] w-[30px] shrink-0">
            {[14, 7.500, 1].map((y) => <path key={y} d={`M1 ${y + 10}L8 ${y}H29L22 ${y + 10}Z`} fill="#f4c888" stroke="#b06f30" strokeWidth="1.600" />)}
          </svg>
          <Fit w={70} className="ml-3 font-bold">Layers</Fit>
        </div>
        <div className="flex h-9 items-center"><Expander c="ml-[54px]" /><Folder /><Fit w={262} className="ml-[10px]">C:\Users\sio2106\Google</Fit></div>
        <div className="flex h-9 items-center">
          <Expander c="ml-[92px]" /><Check />
          <div className="ml-3 flex h-9 w-[232px] shrink-0 items-center bg-[#0078d7] pl-[5px] text-white"><Fit w={227}>NYC_Free_Public_WiF</Fit></div>
        </div>
        <div className="flex h-9 items-center pl-[160px]"><svg viewBox="-6 -6 12 12" className="h-3 w-3"><Dot x={0} y={0} /></svg></div>
        <div className="flex h-9 items-center">
          <svg viewBox="0 0 26 22" className="ml-[122px] h-[22px] w-[26px] shrink-0"><rect x="1" y="1" width="24" height="20" fill="#fff" stroke="#444" strokeWidth="2" /><rect x="2" y="2" width="22" height="3" fill="#8bbdf0" /><path d="M2 6H24M2 11H24M2 16H24M9 6V20M17 6V20" stroke="#555" strokeWidth="1.800" /></svg>
          <Fit w={227} className="ml-[17px]">NYC_Free_Public_WiF</Fit>
        </div>
        <div className="flex h-9 items-center"><Expander c="ml-[54px]" /><Folder /><Fit w={262} className="ml-[10px]">C:\Users\sio2106\Google</Fit></div>
        <div className="flex h-9 items-center"><Expander c="ml-[92px]" /><Check /><Fit w={59} className="ml-[17px]">nynta</Fit></div>
        <div className="flex h-9 items-center pl-[156px]"><div className="h-[22px] w-[30px] border-2 border-[#6e6e6e] bg-[#dbf2cb]" /></div>
        <div className="mx-[2px] mt-auto mb-1 flex h-[30px] items-center justify-between bg-[#f0f0f0] pr-2 pl-2">
          <Chevron d="left" />
          <div className="mr-auto ml-[10px] h-full w-[108px] bg-[#cdcdcd]" />
          <Chevron d="right" />
        </div>
      </div>
    </aside>
  );
}

/* ---------- save dialog ---------- */
const DSep = ({ c }: { c: string }) => <div className={"h-9 w-[2px] shrink-0 bg-[#8f8f8f] " + c} />;

function SaveDialog() {
  return (
    <section className="absolute top-[700px] left-[1428px] flex h-[667px] w-[986px] flex-col border-2 border-[#6b6b6b] bg-[#f0f0f0] shadow-[0_6px_28px_rgba(0,0,0,0.38)]">
      <header className="flex h-[60px] shrink-0 items-center justify-between bg-white pr-[23px] pl-4">
        <Fit w={128} className="text-[23px]">Saving Data</Fit>
        <svg viewBox="0 0 20 20" className="-mt-1 h-5 w-5"><path d="M0 0L20 20M20 0L0 20" stroke="#111" strokeWidth="2" /></svg>
      </header>
      <div className="flex h-16 shrink-0 items-center pl-[9px]">
        <Fit w={73} className="-mt-1">Look in:</Fit>
        <div className="ml-[42px] flex h-11 w-[390px] shrink-0 items-center border-2 border-[#acacac] bg-[#e1e1e1] pr-[8px] pl-1">
          <GdbHome />
          <Fit w={115} className="ml-2">Default.gdb</Fit>
          <Chevron d="down" w={1.800} c="ml-auto" />
        </div>
        <I c="ml-[17px]"><path d="M1 7.500L7 1L13 7.500H9.500V11.500H14.500V14.500H5.500V7.500Z" fill="#ecd75c" stroke="#7d6c12" strokeWidth=".9" /></I>
        <I c="ml-[13px]"><HomeShape /></I>
        <GdbHome c="ml-[15px]" />
        <DSep c="ml-[11px]" />
        <I c="ml-[17px]"><path d="M0 1.500H16M0 4H16" stroke="#0e5fae" strokeWidth="1.500" /><path d="M0 7H16M0 9.500H16M0 12H16M0 14.500H16" stroke="#0e5fae" strokeWidth="1.200" /><path d="M5 0V16M10.500 0V16" stroke="#f0f0f0" strokeWidth=".9" /></I>
        <Caret c="ml-4 scale-125" />
        <DSep c="ml-[15px]" />
        <I c="ml-[17px]"><path d="M.5 14.500V2.500H5.500V6.500H15V14.500Z" fill="#e8d05a" stroke="#7d6c12" /><path d="M1 9H5L6.500 7.500H15" stroke="#fbf3b0" strokeWidth="1.500" fill="none" /><path d="M12 1.500V8.500M8.500 5H15.500" stroke="#000" strokeWidth="1.800" /></I>
        <DSep c="ml-[11px]" />
        <I c="ml-[18px]"><path d="M.5 14.500V3.500H5L6 6H14.500V14.500Z" fill="#cfcfcf" stroke="#5f5f5f" /><path d="M1 9H5.500L7 7H14" stroke="#f8f8f8" strokeWidth="1.800" fill="none" /><Spark x={12.500} y={4} color="#fff" edge="#bbb" /></I>
        <I c="ml-[13px]"><Cylinder grey /><Spark x={12} y={4} color="#fff" edge="#bbb" /></I>
        <I c="ml-[13px]"><g transform="translate(-1.800 -3.800) scale(1.180)"><Toolbox /></g><Spark x={12.500} y={4} color="#fff3a0" edge="#ffd98a" /></I>
      </div>
      <div className="mt-1 ml-[11px] h-[377px] w-[957px] shrink-0 border-2 border-t-[#a0a0a0] border-r-white border-b-white border-l-[#a0a0a0]">
        <div className="h-full w-full border-2 border-t-[#696969] border-r-[#e3e3e3] border-b-[#e3e3e3] border-l-[#696969] bg-white" />
      </div>
      <div className="mt-[21px] flex h-[42px] shrink-0 items-start pl-[17px]">
        <div className="flex h-[31px] w-[161px] items-center"><Fit w={62}>Name:</Fit></div>
        <div className="mt-[2px] flex h-10 w-[582px] items-center border-2 border-[#7a7a7a] bg-white pl-[7px]"><Fit w={148}>Export_Output</Fit></div>
        <button className="ml-[52px] flex h-[42px] w-[146px] items-center justify-center border-4 border-[#0078d7] bg-[#e1e1e1] pr-[3px] pb-[2px]"><Fit w={49}>Save</Fit></button>
      </div>
      <div className="relative mt-[14px] flex h-[42px] shrink-0 items-start pl-[17px]">
        <div className="flex h-[31px] w-[161px] items-center"><Fit w={134}>Save as type:</Fit></div>
        <div className="mt-[2px] flex h-[41px] w-[582px] items-center justify-between border-2 border-[#005499] bg-[#cce4f7] pr-2 pl-[5px]">
          <Fit w={449}>File and Personal Geodatabase feature classes</Fit>
          <Chevron d="down" w={1.800} />
        </div>
        <button className="ml-[52px] flex h-[42px] w-[146px] items-center justify-center border-2 border-[#adadad] bg-[#e1e1e1] pr-[3px] pb-[2px]"><Fit w={65}>Cancel</Fit></button>
        <ul className="absolute top-[43px] left-[178px] flex w-[582px] flex-col border-2 border-[#0078d7] bg-white leading-[26px] shadow-[5px_5px_6px_rgba(0,0,0,0.35)]">
          <li className="h-[26px] pl-[3px]"><Fit w={449}>File and Personal Geodatabase feature classes</Fit></li>
          <li className="h-[26px] bg-[#0078d7] pl-[3px] text-white"><Fit w={88}>Shapefile</Fit></li>
          <li className="h-[26px] pl-[3px]"><Fit w={244}>Database feature classes</Fit></li>
        </ul>
      </div>
    </section>
  );
}

const SideTab = ({ icon, label, w, c }: { icon: React.ReactNode; label: string; w: number; c: string }) => (
  <div className={"ml-[7px] flex w-10 flex-col items-center rounded-l-md border-2 border-r-0 border-[#a0a0a0] bg-[#f0f0f0] pt-2 " + c}>
    {icon}
    <Fit vertical w={w} className="mt-[6px] text-[24px] leading-[30px] text-[#6d6d6d] [writing-mode:vertical-rl]">{label}</Fit>
  </div>
);

export default function App() {
  return (
    <div className="relative flex h-[2080px] w-[3840px] flex-col overflow-hidden bg-linear-to-r from-[#f0f0f0] to-[#fcfcfc] font-['Noto_Sans',sans-serif] text-[22px] leading-none text-black">
      <header className="flex h-[46px] shrink-0 items-center bg-white">
        <svg viewBox="0 0 32 32" className="ml-[2px] h-8 w-8">
          <circle cx="15.500" cy="16" r="15" fill="#12566f" /><path d="M3 20C6 30 20 32 27 24C30 18 28 10 25 6C26 14 20 22 3 20Z" fill="#0c3f78" />
          <path d="M20 6C26 8 28 14 26 20L20 22Z" fill="#3c9c4c" />
          <path d="M20 20L30 30" stroke="#b07a3c" strokeWidth="4.500" /><circle cx="14" cy="13" r="8.500" fill="#cfe9f5" stroke="#6db4d6" strokeWidth="2" /><path d="M10 8C14 6 18 9 18 12" stroke="#fff" strokeWidth="3" fill="none" />
        </svg>
        <Fit w={191} className="ml-[6px] translate-y-0 font-['Open_Sans',sans-serif] text-[24px] text-[#999]">Untitled - ArcMap</Fit>
        <div className="ml-auto flex items-center pr-[39px]">
          <div className="h-[2px] w-5 bg-[#999]" />
          <svg viewBox="0 0 20 20" className="ml-[71px] h-5 w-5"><path d="M1 5H15V19H1ZM5 5V1H19V15H15" fill="none" stroke="#999" strokeWidth="2" /></svg>
          <svg viewBox="0 0 20 20" className="ml-[73px] h-5 w-5"><path d="M0 0L20 20M20 0L0 20" stroke="#999" strokeWidth="2" /></svg>
        </div>
      </header>
      <nav className="flex h-[52px] shrink-0 items-center pl-[24px]">
        <Fit w={37}>File</Fit>
        <Fit w={40} className="ml-[31px]">Edit</Fit>
        <Fit w={50} className="ml-[32px]">View</Fit>
        <Fit w={118} className="ml-[32px]">Bookmarks</Fit>
        <Fit w={58} className="ml-[32px]">Insert</Fit>
        <Fit w={97} className="ml-[31px]">Selection</Fit>
        <Fit w={155} className="ml-[32px]">Geoprocessing</Fit>
        <Fit w={112} className="ml-[33px]">Customize</Fit>
        <Fit w={99} className="ml-[31px]">Windows</Fit>
        <Fit w={51} className="ml-[32px]">Help</Fit>
      </nav>
      <div className="h-[102px] shrink-0">
        <StandardToolbar />
        <ToolsToolbar />
      </div>
      <main className="flex h-[1840px] shrink-0">
        <Contents />
        <div className="ml-2 flex h-[1838px] w-[3386px] shrink-0 flex-col border-t-2 border-l-2 border-[#a0a0a0] bg-[#f0f0f0]">
          <div className="flex h-[1804px] border-t-2 border-l-2 border-[#696969]">
            <div className="h-[1802px] w-[3350px] shrink-0 border-r-2 border-b-2 border-white bg-white">
              <div className="h-[1800px] w-[3348px] border-r-2 border-b-2 border-[#e3e3e3]"><CityMap /></div>
            </div>
            <div className="flex w-[32px] flex-col items-center border-r-2 border-[#e3e3e3] pr-[2px]">
              <Chevron d="up" c="mt-[10px]" />
              <div className="mt-2 h-[1728px] w-[28px] bg-[#cdcdcd]" />
              <Chevron d="down" c="mt-[10px]" />
            </div>
          </div>
          <div className="flex h-[32px] items-center border-b-2 border-l-2 border-[#e3e3e3] border-l-[#696969] pb-[4px]">
            <div className="flex h-[28px] w-[34px] items-center justify-center border-2 border-[#90c8f6] bg-[#bcdcf4]">
              <svg viewBox="0 0 16 16" className="h-4 w-4"><rect x="1" y="1" width="14" height="14" fill="#c6dd62" stroke="#222" strokeWidth="2" /><path d="M3 12C6 4 9 8 13 3V6L8 13H4Z" fill="#6a9a35" /><rect x="8" y="9" width="4" height="3" fill="#fff" /></svg>
            </div>
            <svg viewBox="0 0 14 16" className="ml-[10px] h-4 w-[14px]"><path d="M1 1H9L13 5V15H1Z" fill="#fff" stroke="#222" strokeWidth="2" /><path d="M4 7H7M4 11H6" stroke="#222" strokeWidth="1.500" /><rect x="7" y="8" width="4" height="3" fill="#8ab5e8" /></svg>
            <div className="ml-[14px] h-[26px] w-[2px] bg-[#8a8a8a]" />
            <svg viewBox="0 0 18 16" className="ml-[18px] h-4 w-[18px]"><path d="M2 6C4 0 12 0 15 5M16 10C14 16 6 16 3 11" fill="none" stroke="#11509b" strokeWidth="2.200" /><path d="M17 0V7H10ZM1 16V9H8Z" fill="#11509b" /></svg>
            <svg viewBox="0 0 12 14" className="ml-[18px] h-[14px] w-3"><path d="M0 0H4V14H0ZM8 0H12V14H8Z" fill="#1d4f9e" /></svg>
            <Chevron d="left" c="ml-5" />
            <div className="ml-2 h-[28px] w-[3126px] bg-[#cdcdcd]" />
            <Chevron d="right" c="ml-3" />
          </div>
        </div>
        <div className="flex w-[46px] flex-col pt-[5px]">
          <SideTab c="h-[142px]" icon={<CatalogWindow />} label="Catalog" w={84} />
          <SideTab c="h-[134px]" icon={<SearchWindow />} label="Search" w={77} />
        </div>
      </main>
      <footer className="flex h-10 shrink-0 items-center border-t border-[#f4f4f4] bg-[#f0f0f0] pl-[3037px]">
        <div className="mr-[8px] h-[34px] w-[244px] border-r-2 border-[#f7f7f7]" />
        <div className="h-[34px] w-[38px] border-r-2 border-[#f7f7f7]" />
        <Fit w={335} className="ml-[8px]">{"-74.541  40.881 Decimal Degrees"}</Fit>
      </footer>
      <SaveDialog />
    </div>
  );
}
